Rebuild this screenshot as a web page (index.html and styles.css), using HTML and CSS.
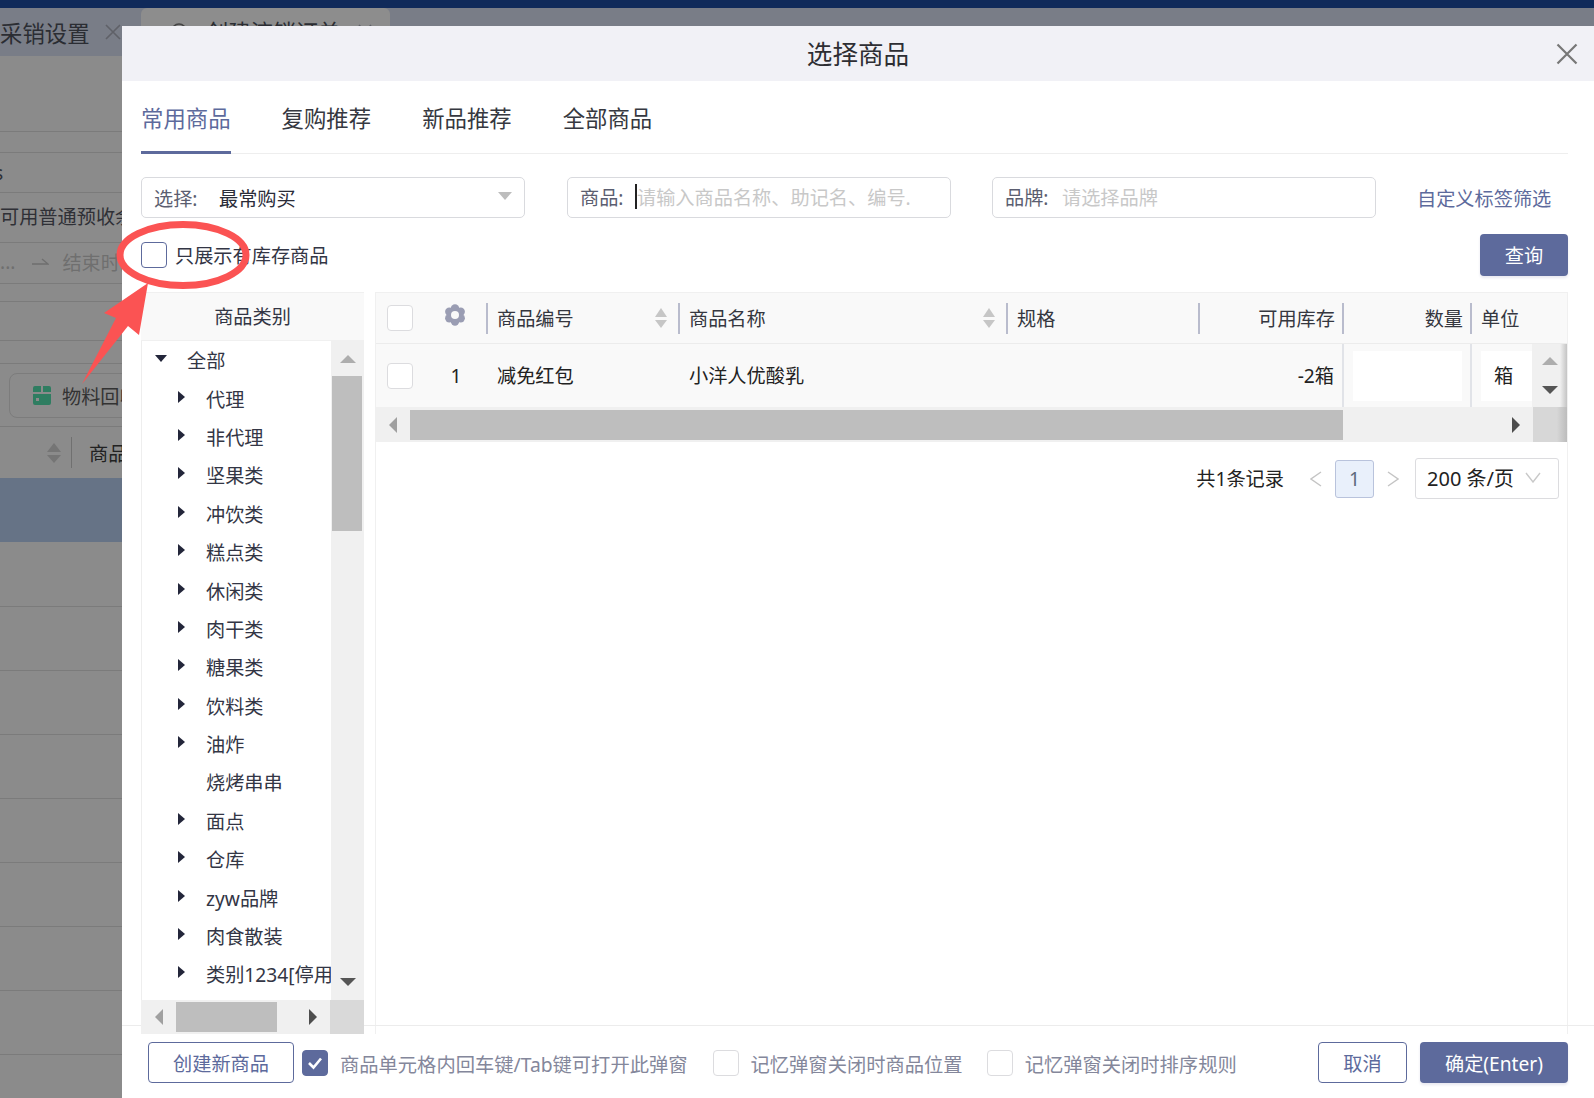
FILE: index.html
```html
<!DOCTYPE html>
<html lang="zh-CN">
  <head>
    <meta charset="UTF-8" />
    <meta name="viewport" content="width=device-width, initial-scale=1.0" />
    <title>选择商品</title>
    <link rel="stylesheet" href="styles.css">
  </head>
  <body>
    <!-- dimmed page behind the dialog -->
    <div class="page">
      <div class="topbar"></div>
      <div class="tabstrip">
        <div class="pagetab">
          <span>采销设置</span>
          <svg class="pagetab-x" width="16" height="16" viewBox="0 0 16 16"><path d="M1 1L15 15M15 1L1 15" stroke="#5f6168" stroke-width="1.6" fill="none"/></svg>
        </div>
        <div class="pagetab pagetab-on">
          <svg width="18" height="18" viewBox="0 0 18 18"><circle cx="9" cy="9" r="7" stroke="#444" stroke-width="1.6" fill="none"/></svg>
          <span>创建流销订单</span>
          <svg width="14" height="14" viewBox="0 0 14 14"><path d="M1 1L13 13M13 1L1 13" stroke="#5f6168" stroke-width="1.6" fill="none"/></svg>
        </div>
      </div>
      <div class="backrow h76"></div>
      <div class="backrow h21"></div>
      <div class="backrow h40"><span class="backtext backcut">s</span></div>
      <div class="backrow h50 backrow-up"><span class="backtext">可用普通预收余额</span></div>
      <div class="backrow h41 backrow-up">
        <span class="backmuted">...</span>
        <svg class="backarrow" width="17" height="8" viewBox="0 0 17 8"><path d="M0 6H16L10 1" stroke="#6f6f6f" stroke-width="1.4" fill="none"/></svg>
        <span class="backmuted">结束时间</span>
      </div>
      <div class="backrow h18"></div>
      <div class="backrow h39"></div>
      <div class="backrow h23"></div>
      <div class="backtool">
        <div class="backbtn">
          <svg width="20" height="19" viewBox="0 0 20 19"><path d="M3 0H9V6H1V2Q1 0 3 0ZM11 0H17Q19 0 19 2V6H11ZM1 8H19V17Q19 19 17 19H3Q1 19 1 17ZM4 12V15H7V12Z" fill="#2f7d61" fill-rule="evenodd"/></svg>
          <span>物料回收</span>
        </div>
      </div>
      <div class="backhead">
        <span class="sort sort-back"><i class="up"></i><i class="down"></i></span>
        <span class="backsep"></span>
        <span>商品</span>
      </div>
      <div class="backsel"></div>
      <div class="backrow h65"></div>
      <div class="backrow h64"></div>
      <div class="backrow h64"></div>
      <div class="backrow h64"></div>
      <div class="backrow h64"></div>
      <div class="backrow h64"></div>
      <div class="backrow h64"></div>
      <div class="backrow h64"></div>
    </div>

    <!-- dialog -->
    <div class="modal">
      <div class="modal-title">
        <span>选择商品</span>
        <svg class="modal-close" width="22" height="22" viewBox="0 0 22 22"><path d="M1.5 1.5L20.5 20.5M20.5 1.5L1.5 20.5" stroke="#777" stroke-width="2.2" fill="none"/></svg>
      </div>

      <div class="modal-body">
        <div class="tabs">
          <div class="tab tab-on">常用商品</div>
          <div class="tab">复购推荐</div>
          <div class="tab">新品推荐</div>
          <div class="tab">全部商品</div>
        </div>

        <div class="filters">
          <div class="field">
            <span class="field-label w65">选择:</span>
            <span class="field-value">最常购买</span>
            <i class="caret"></i>
          </div>
          <div class="field field-up">
            <span class="field-label w55">商品:</span>
            <span class="cursor"></span>
            <span class="field-hint">请输入商品名称、助记名、编号.</span>
          </div>
          <div class="field field-up field-brand">
            <span class="field-label w57">品牌:</span>
            <span class="field-hint">请选择品牌</span>
          </div>
          <a class="tag-link">自定义标签筛选</a>
        </div>

        <div class="options">
          <span class="cb cb-blue"></span>
          <span class="options-label">只展示有库存商品</span>
          <button class="btn btn-main btn-query">查询</button>
        </div>

        <div class="main">
          <!-- category tree -->
          <div class="tree">
            <div class="tree-head">商品类别</div>
            <div class="tree-mid">
              <div class="tree-list">
                <div class="node node-root"><i class="arrow-down"></i>全部</div>
                <div class="node"><i class="arrow-right"></i>代理</div>
                <div class="node"><i class="arrow-right"></i>非代理</div>
                <div class="node"><i class="arrow-right"></i>坚果类</div>
                <div class="node"><i class="arrow-right"></i>冲饮类</div>
                <div class="node"><i class="arrow-right"></i>糕点类</div>
                <div class="node"><i class="arrow-right"></i>休闲类</div>
                <div class="node"><i class="arrow-right"></i>肉干类</div>
                <div class="node"><i class="arrow-right"></i>糖果类</div>
                <div class="node"><i class="arrow-right"></i>饮料类</div>
                <div class="node"><i class="arrow-right"></i>油炸</div>
                <div class="node node-leaf">烧烤串串</div>
                <div class="node"><i class="arrow-right"></i>面点</div>
                <div class="node"><i class="arrow-right"></i>仓库</div>
                <div class="node"><i class="arrow-right"></i>zyw品牌</div>
                <div class="node"><i class="arrow-right"></i>肉食散装</div>
                <div class="node"><i class="arrow-right"></i>类别1234[停用]</div>
              </div>
              <div class="tree-vbar">
                <i class="sb-up"></i>
                <div class="tree-vthumb"></div>
                <i class="sb-down"></i>
              </div>
            </div>
            <div class="tree-foot">
              <div class="tree-hbar">
                <i class="sb-left"></i>
                <div class="tree-hthumb"></div>
                <i class="sb-right"></i>
              </div>
              <div class="tree-corner"></div>
            </div>
          </div>

          <!-- product table -->
          <div class="grid-wrap">
            <div class="grid grid-head">
              <div class="cell cell-first">
                <span class="cb"></span>
                <svg class="gear" width="22" height="22" viewBox="0 0 22 22">
                  <g fill="#9a9db3">
                    <circle cx="11" cy="4.5" r="4.2"/><circle cx="11" cy="17.5" r="4.2"/>
                    <circle cx="5.3" cy="7.7" r="4.2"/><circle cx="16.7" cy="7.7" r="4.2"/>
                    <circle cx="5.3" cy="14.3" r="4.2"/><circle cx="16.7" cy="14.3" r="4.2"/>
                  </g>
                  <circle cx="11" cy="11" r="4" fill="#f9f9f9"/>
                </svg>
              </div>
              <div class="cell th"><span>商品编号</span><span class="sort"><i class="up"></i><i class="down"></i></span></div>
              <div class="cell th"><span>商品名称</span><span class="sort"><i class="up"></i><i class="down"></i></span></div>
              <div class="cell th">规格</div>
              <div class="cell th th-right">可用库存</div>
              <div class="cell th th-right">数量</div>
              <div class="cell th">单位</div>
              <div class="cell"></div>
            </div>
            <div class="grid grid-row">
              <div class="cell cell-first">
                <span class="cb"></span>
                <span class="rownum">1</span>
              </div>
              <div class="cell td">减免红包</div>
              <div class="cell td">小洋人优酸乳</div>
              <div class="cell td"></div>
              <div class="cell td td-right">-2箱</div>
              <div class="cell td-input"><div class="qty"></div></div>
              <div class="cell td-input"><div class="unit">箱</div></div>
              <div class="cell grid-vbar">
                <i class="sb-up"></i>
                <i class="sb-down"></i>
              </div>
            </div>
            <div class="grid-foot">
              <div class="grid-hbar">
                <i class="sb-left"></i>
                <div class="grid-hthumb"></div>
                <i class="sb-right"></i>
              </div>
              <div class="grid-corner"></div>
            </div>
            <div class="pager">
              <span class="pager-total">共1条记录</span>
              <svg width="12" height="16" viewBox="0 0 12 16"><path d="M11 1L1 8L11 15" stroke="#c4c4c4" stroke-width="1.4" fill="none"/></svg>
              <span class="pager-num">1</span>
              <svg width="12" height="16" viewBox="0 0 12 16"><path d="M1 1L11 8L1 15" stroke="#c4c4c4" stroke-width="1.4" fill="none"/></svg>
              <div class="pager-size">
                <span>200 条/页</span>
                <svg width="16" height="11" viewBox="0 0 16 11"><path d="M1 1L8 10L15 1" stroke="#c9c9c9" stroke-width="1.4" fill="none"/></svg>
              </div>
            </div>
          </div>
        </div>
      </div>

      <div class="modal-foot">
        <button class="btn btn-line btn-create">创建新商品</button>
        <span class="cb cb-on">
          <svg width="16" height="14" viewBox="0 0 16 14"><path d="M2 7L6.5 11.5L14 2.5" stroke="#fff" stroke-width="2.6" fill="none"/></svg>
        </span>
        <span class="foot-label">商品单元格内回车键/Tab键可打开此弹窗</span>
        <span class="cb"></span>
        <span class="foot-label foot-tight">记忆弹窗关闭时商品位置</span>
        <span class="cb"></span>
        <span class="foot-label">记忆弹窗关闭时排序规则</span>
        <button class="btn btn-line btn-cancel">取消</button>
        <button class="btn btn-main btn-ok">确定(Enter)</button>
      </div>
    </div>

    <!-- red annotation drawn over the screenshot -->
    <svg class="mark" width="300" height="400" viewBox="0 0 300 400">
      <ellipse cx="183" cy="255" rx="63" ry="30.5" fill="none" stroke="#fb5353" stroke-width="7"/>
      <path d="M148 283L139 335L128 326L82 384L116 318L104 313Z" fill="#fb5353"/>
    </svg>
  </body>
</html>
```

FILE: styles.css
```css
* {
  box-sizing: border-box;
}

body {
  margin: 0;
  width: 1594px;
  height: 1098px;
  overflow: hidden;
  position: relative;
  background: #8b8b8b;
  color: #333645;
  font-family: "Noto Sans", "Noto Sans CJK SC", sans-serif;
  font-size: 19.2px;
}

i {
  display: block;
}

/* page behind */
.page {
  height: 1098px;
  overflow: hidden;
  background: #8b8b8b;
}

.topbar {
  height: 8px;
  background: #102a5a;
}

.tabstrip {
  height: 48px;
  display: flex;
  background: #797d87;
}

.pagetab {
  width: 141px;
  display: flex;
  align-items: center;
  font-size: 22.4px;
  color: #2b2d33;
}

.pagetab-x {
  margin-left: 15px;
}

.pagetab-on {
  width: 249px;
  padding: 0 0 2px 29px;
  gap: 18px;
  background: #8d8d8d;
  border-radius: 6px 6px 0 0;
}

.backrow {
  border-bottom: 1px solid #7b7b7b;
  display: flex;
  align-items: center;
  white-space: nowrap;
}

.backrow-up {
  padding-bottom: 3px;
}

.h76 { height: 76px; }
.h21 { height: 21px; }
.h40 { height: 40px; }
.h50 { height: 50px; }
.h41 { height: 41px; }
.h18 { height: 18px; }
.h39 { height: 39px; }
.h23 { height: 23px; }
.h64 { height: 64px; }
.h65 { height: 65px; }

.backtext {
  color: #2f3036;
}

.backcut {
  margin-left: -6px;
}

.backmuted {
  color: #6f6f6f;
}

.backarrow {
  margin: 0 13px 0 17px;
}

.backtool {
  height: 63px;
  padding: 9px 0 0 9px;
  border-bottom: 1px solid #7b7b7b;
}

.backbtn {
  width: 200px;
  height: 45px;
  display: flex;
  align-items: center;
  gap: 10px;
  padding-left: 22px;
  border: 1px solid #7c7c7c;
  border-radius: 8px;
  color: #333;
}

.backhead {
  height: 51px;
  display: flex;
  align-items: center;
  padding-left: 47px;
  color: #222;
}

.backsep {
  width: 1px;
  height: 31px;
  margin: 0 17px 0 10px;
  background: #707070;
}

.backsel {
  height: 64px;
  background: #667386;
}

/* dialog */
.modal {
  position: absolute;
  left: 122px;
  top: 26px;
  right: 0;
  bottom: 0;
  display: flex;
  flex-direction: column;
  background: #fff;
}

.modal-title {
  position: relative;
  height: 55px;
  flex: none;
  display: flex;
  align-items: center;
  justify-content: center;
  padding-bottom: 2px;
  background: #f1f1f6;
  font-size: 25.6px;
  color: #2e2e33;
}

.modal-close {
  position: absolute;
  right: 16px;
  top: 17px;
}

.modal-body {
  height: 944px;
  flex: none;
  padding: 0 26px 0 19px;
}

.tabs {
  height: 73px;
  display: flex;
  gap: 51px;
  border-bottom: 1px solid #eeeeee;
}

.tab {
  height: 73px;
  line-height: 75px;
  font-size: 22.4px;
  color: #363840;
  white-space: nowrap;
}

.tab-on {
  color: #5d6a9c;
  border-bottom: 3px solid #5d6a9c;
}

.filters {
  display: flex;
  align-items: center;
  gap: 42px;
  margin-top: 23px;
}

.field {
  position: relative;
  width: 384px;
  height: 41px;
  flex: none;
  display: flex;
  align-items: center;
  padding-left: 12px;
  border: 1px solid #d9dade;
  border-radius: 5px;
  white-space: nowrap;
  overflow: hidden;
}

.field-up {
  padding-bottom: 2px;
}

.field-brand {
  margin-left: -1px;
}

.field-label {
  color: #5b5e70;
  flex: none;
}

.w65 { width: 65px; }
.w55 { width: 55px; }
.w57 { width: 57px; }

.field-value {
  color: #2a2c38;
}

.field-hint {
  color: #c8c8c8;
}

.cursor {
  width: 2px;
  height: 25px;
  flex: none;
  background: #222;
}

.caret {
  position: absolute;
  right: 12px;
  top: 14px;
  border-left: 7px solid transparent;
  border-right: 7px solid transparent;
  border-top: 8px solid #bdbdbd;
}

.tag-link {
  margin-left: -1px;
  color: #5d6a9c;
  white-space: nowrap;
}

.options {
  height: 42px;
  margin-top: 16px;
  display: flex;
  align-items: center;
}

.options-label {
  margin-left: 8px;
  color: #333645;
}

.cb {
  width: 26px;
  height: 26px;
  flex: none;
  display: inline-flex;
  align-items: center;
  justify-content: center;
  background: #fff;
  border: 1px solid #dcdcdf;
  border-radius: 4px;
}

.cb-blue {
  border-color: #5d6a9c;
}

.cb-on {
  background: #5d6a9c;
  border-color: #5d6a9c;
}

.btn {
  height: 41px;
  border-radius: 4px;
  font-family: inherit;
  font-size: 19.2px;
  cursor: pointer;
  padding: 0;
}

.btn-main {
  background: #5d6a9c;
  color: #fff;
  border: none;
  box-shadow: 0 2px 3px #e8e8f0;
}

.btn-line {
  background: #fff;
  color: #5d6a9c;
  border: 1px solid #5d6a9c;
}

.btn-query {
  width: 88px;
  height: 42px;
  margin-left: auto;
}

/* tree + table */
.main {
  height: 733px;
  margin-top: 16px;
  display: flex;
  gap: 11px;
}

.tree {
  position: relative;
  width: 223px;
  height: 742px;
  flex: none;
  display: flex;
  flex-direction: column;
  background: #fff;
}

.tree-head {
  height: 49px;
  flex: none;
  line-height: 48px;
  text-align: center;
  background: #f9f9f9;
  border-top: 1px solid #f0f0f0;
  border-bottom: 1px solid #f0f0f0;
}

.tree-mid {
  height: 659px;
  flex: none;
  display: flex;
}

.tree-list {
  width: 190px;
  flex: none;
  border-left: 1px solid #eeeeee;
  overflow: hidden;
}

.node {
  height: 38.4px;
  display: flex;
  align-items: center;
  padding-left: 36px;
  white-space: nowrap;
  color: #333645;
}

.node-root {
  padding-left: 13px;
}

.node-leaf {
  padding-left: 64px;
}

.arrow-right {
  width: 0;
  flex: none;
  margin-right: 21px;
  margin-top: -4px;
  border-top: 6px solid transparent;
  border-bottom: 6px solid transparent;
  border-left: 7px solid #23263a;
}

.arrow-down {
  width: 0;
  flex: none;
  margin-right: 20px;
  margin-top: -4px;
  border-left: 6px solid transparent;
  border-right: 6px solid transparent;
  border-top: 7px solid #23263a;
}

.tree-vbar {
  flex: 1;
  display: flex;
  flex-direction: column;
  align-items: center;
  background: #f0f0f0;
  padding: 14px 0;
}

.tree-vthumb {
  width: 30px;
  height: 155px;
  margin-top: 13px;
  align-self: flex-start;
  margin-left: 1px;
  background: #bebebe;
}

.sb-up {
  width: 0;
  flex: none;
  border-left: 8px solid transparent;
  border-right: 8px solid transparent;
  border-bottom: 8px solid #adadad;
}

.sb-down {
  width: 0;
  flex: none;
  margin-top: auto;
  border-left: 8px solid transparent;
  border-right: 8px solid transparent;
  border-top: 8px solid #555;
}

.sb-left {
  width: 0;
  flex: none;
  border-top: 8px solid transparent;
  border-bottom: 8px solid transparent;
  border-right: 8px solid #a0a0a0;
}

.sb-right {
  width: 0;
  flex: none;
  border-top: 8px solid transparent;
  border-bottom: 8px solid transparent;
  border-left: 8px solid #4d4d4d;
}

.tree-foot {
  height: 34px;
  flex: none;
  display: flex;
}

.tree-hbar {
  width: 189px;
  flex: none;
  display: flex;
  align-items: center;
  padding-left: 14px;
  background: #f0f0f0;
}

.tree-hthumb {
  width: 101px;
  height: 30px;
  margin: 0 32px 0 13px;
  background: #bebebe;
}

.tree-corner {
  flex: 1;
  background: #d9d9d9;
}

.grid-wrap {
  width: 1193px;
  height: 742px;
  flex: none;
  border-left: 1px solid #f0f0f0;
  border-right: 1px solid #f0f0f0;
}

.grid {
  display: grid;
  grid-template-columns: 110px 192px 328px 192px 144px 128px 62px 35px;
}

.grid-head {
  height: 52px;
  background: #f9f9f9;
  border-top: 1px solid #f0f0f0;
  border-bottom: 1px solid #ececec;
}

.grid-row {
  height: 63px;
  background: #f9f9f9;
}

.cell {
  display: flex;
  align-items: center;
  min-width: 0;
}

.cell-first {
  padding-left: 11px;
}

.gear {
  margin-left: 31px;
  margin-top: -6px;
}

.rownum {
  width: 22px;
  margin-left: 32px;
  text-align: center;
  color: #222;
}

.th {
  color: #35373f;
}

.th::before {
  content: "";
  width: 2px;
  height: 31px;
  flex: none;
  margin-right: 9px;
  background: #b9bccd;
}

.th-right {
  padding-right: 7px;
}

.th-right::before {
  margin-right: auto;
}

.sort {
  margin-left: auto;
  margin-right: 11px;
  display: flex;
  flex-direction: column;
  gap: 3px;
}

.sort .up {
  border-left: 6px solid transparent;
  border-right: 6px solid transparent;
  border-bottom: 9px solid #c6c6c6;
}

.sort .down {
  border-left: 6px solid transparent;
  border-right: 6px solid transparent;
  border-top: 8px solid #c6c6c6;
}

.sort-back {
  margin: 0;
}

.sort-back .up {
  border-bottom-color: #757575;
  border-left-width: 7px;
  border-right-width: 7px;
}

.sort-back .down {
  border-top-color: #757575;
  border-left-width: 7px;
  border-right-width: 7px;
}

.td {
  padding-left: 11px;
  padding-bottom: 2px;
  color: #222;
  white-space: nowrap;
}

.td-right {
  justify-content: flex-end;
  padding-right: 8px;
}

.td-input {
  padding: 7px 8px 6px 9px;
  border-left: 2px solid #e1e3e8;
}

.qty {
  width: 100%;
  height: 50px;
  background: #fff;
}

.unit {
  flex: 1;
  height: 50px;
  margin-right: -8px;
  padding-left: 13px;
  line-height: 50px;
  background: #fff;
  color: #222;
}

.grid-vbar {
  flex-direction: column;
  padding: 13px 0;
  background: linear-gradient(90deg, #f0f0f0 80%, #c4c4c4);
}

.grid-foot {
  height: 35px;
  display: flex;
}

.grid-hbar {
  width: 1157px;
  flex: none;
  display: flex;
  align-items: center;
  padding-left: 13px;
  background: #f0f0f0;
}

.grid-hthumb {
  width: 933px;
  height: 30px;
  margin: 0 169px 0 13px;
  background: #bebebe;
}

.grid-corner {
  flex: 1;
  background: linear-gradient(90deg, #d7d7d7 70%, #bcbcbc);
}

.pager {
  display: flex;
  align-items: center;
  justify-content: flex-end;
  gap: 13px;
  padding: 16px 8px 0 0;
  color: #222;
}

.pager-total {
  margin-right: 13px;
  padding-bottom: 2px;
}

.pager-num {
  width: 39px;
  height: 38px;
  line-height: 36px;
  text-align: center;
  background: #e9f0fb;
  border: 1px solid #b9c3dc;
  border-radius: 3px;
  color: #5d6a7c;
}

.pager-size {
  width: 144px;
  height: 41px;
  display: flex;
  align-items: center;
  justify-content: space-between;
  margin-left: 3px;
  padding: 0 17px 2px 11px;
  border: 1px solid #dcdcdf;
  border-radius: 3px;
  font-size: 20px;
}

/* footer */
.modal-foot {
  height: 73px;
  flex: none;
  display: flex;
  align-items: flex-start;
  padding: 16px 26px 0 26px;
  border-top: 1px solid #ececec;
  white-space: nowrap;
}

.modal-foot .cb {
  margin-top: 8px;
}

.foot-label {
  margin: 2px 25px 0 12px;
  line-height: 41px;
  font-size: 19.3px;
  color: #84879b;
}

.foot-tight {
  margin-right: 24px;
}

.btn-create {
  width: 146px;
  margin-right: 8px;
}

.btn-cancel {
  width: 89px;
  margin-left: auto;
}

.btn-ok {
  width: 148px;
  margin-left: 13px;
}

.mark {
  position: absolute;
  left: 0;
  top: 0;
  pointer-events: none;
}
```
